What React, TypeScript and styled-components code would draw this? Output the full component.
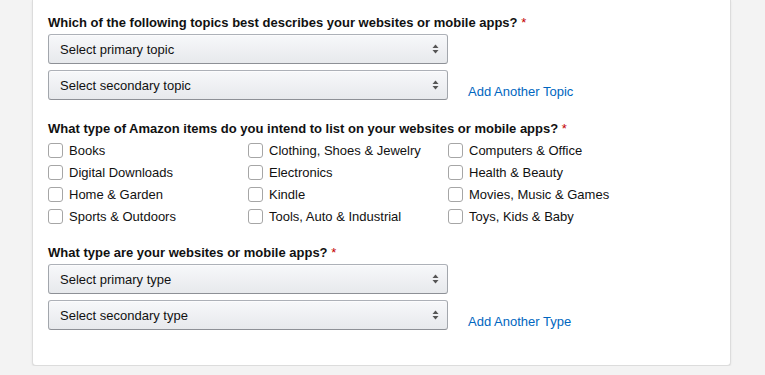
import React from 'react';
import styled, { createGlobalStyle } from 'styled-components';

const GlobalStyle = createGlobalStyle`
  body {
    margin: 0;
    background-color: #f3f3f3;
    font-family: 'Liberation Sans', Arial, sans-serif;
    color: #111;
  }
`;

const Panel = styled.div`
  box-sizing: border-box;
  width: 699px;
  margin-left: 32px;
  padding: 13px 15px 35px;
  background: #fff;
  border: 1px solid #dcdcdc;
  border-top: none;
  border-radius: 0 0 4px 4px;
  box-shadow: 0 1px 2px rgba(0, 0, 0, 0.08);
`;

const Section = styled.div<{ $gap?: number }>`
  margin-top: ${(props) => props.$gap || 0}px;
`;

const Label = styled.div<{ $space?: number }>`
  font-size: 13px;
  line-height: 19px;
  font-weight: 700;
  color: #111;
  margin-bottom: ${(props) => (props.$space === undefined ? 2 : props.$space)}px;
`;

const Required = styled.span`
  color: #c40000;
  font-weight: 400;
`;

const SelectStack = styled.div`
  display: flex;
  flex-direction: column;
  gap: 6px;
`;

const SelectRow = styled.div`
  display: flex;
  align-items: flex-end;
  gap: 20px;
`;

const SelectWrap = styled.div`
  position: relative;
  width: 400px;
  height: 30px;
`;

const Select = styled.select`
  appearance: none;
  -webkit-appearance: none;
  box-sizing: border-box;
  width: 100%;
  height: 100%;
  margin: 0;
  padding: 0 28px 0 11px;
  font-family: 'Liberation Sans', Arial, sans-serif;
  font-size: 13px;
  color: #111;
  border: 1px solid;
  border-color: #adb1b8 #a2a6ac #8d9096;
  border-radius: 3px;
  background: linear-gradient(to bottom, #f7f8fa, #e7e9ec);
  box-shadow: inset 0 1px 0 rgba(255, 255, 255, 0.6);
  outline: none;
`;

const Arrows = styled.svg`
  position: absolute;
  right: 9px;
  top: 10px;
  pointer-events: none;
`;

const AddLink = styled.a`
  font-size: 13px;
  line-height: 19px;
  color: #0066c0;
  text-decoration: none;
  margin-bottom: -1px;
  cursor: pointer;
`;

const CheckGrid = styled.div`
  display: grid;
  grid-template-columns: repeat(3, 200px);
  grid-auto-rows: 22px;
`;

const CheckItem = styled.label`
  display: flex;
  align-items: center;
  gap: 6px;
  font-size: 13px;
  color: #111;
`;

const Box = styled.input`
  appearance: none;
  -webkit-appearance: none;
  box-sizing: border-box;
  width: 15px;
  height: 15px;
  margin: 0;
  border: 1px solid #a6a6a6;
  border-radius: 3px;
  background: #fff;
`;

const categories = [
  'Books',
  'Clothing, Shoes & Jewelry',
  'Computers & Office',
  'Digital Downloads',
  'Electronics',
  'Health & Beauty',
  'Home & Garden',
  'Kindle',
  'Movies, Music & Games',
  'Sports & Outdoors',
  'Tools, Auto & Industrial',
  'Toys, Kids & Baby',
];

const Dropdown = ({ placeholder }: { placeholder: string }) => (
  <SelectWrap>
    <Select defaultValue="">
      <option value="">{placeholder}</option>
    </Select>
    <Arrows width="7" height="10" viewBox="0 0 7 10">
      <path d="M3.5 0.5 L6.5 4 L0.5 4 Z" fill="#555" />
      <path d="M3.5 9.5 L6.5 6 L0.5 6 Z" fill="#555" />
    </Arrows>
  </SelectWrap>
);

const App = () => {
  return (
    <>
      <GlobalStyle />
      <Panel>
        <Section>
          <Label>
            Which of the following topics best describes your websites or mobile apps? <Required>*</Required>
          </Label>
          <SelectStack>
            <SelectRow>
              <Dropdown placeholder="Select primary topic" />
            </SelectRow>
            <SelectRow>
              <Dropdown placeholder="Select secondary topic" />
              <AddLink>Add Another Topic</AddLink>
            </SelectRow>
          </SelectStack>
        </Section>

        <Section $gap={19}>
          <Label $space={1}>
            What type of Amazon items do you intend to list on your websites or mobile apps? <Required>*</Required>
          </Label>
          <CheckGrid>
            {categories.map((c) => (
              <CheckItem key={c}>
                <Box type="checkbox" />
                {c}
              </CheckItem>
            ))}
          </CheckGrid>
        </Section>

        <Section $gap={16}>
          <Label>
            What type are your websites or mobile apps? <Required>*</Required>
          </Label>
          <SelectStack>
            <SelectRow>
              <Dropdown placeholder="Select primary type" />
            </SelectRow>
            <SelectRow>
              <Dropdown placeholder="Select secondary type" />
              <AddLink>Add Another Type</AddLink>
            </SelectRow>
          </SelectStack>
        </Section>
      </Panel>
    </>
  );
};

export default App;
